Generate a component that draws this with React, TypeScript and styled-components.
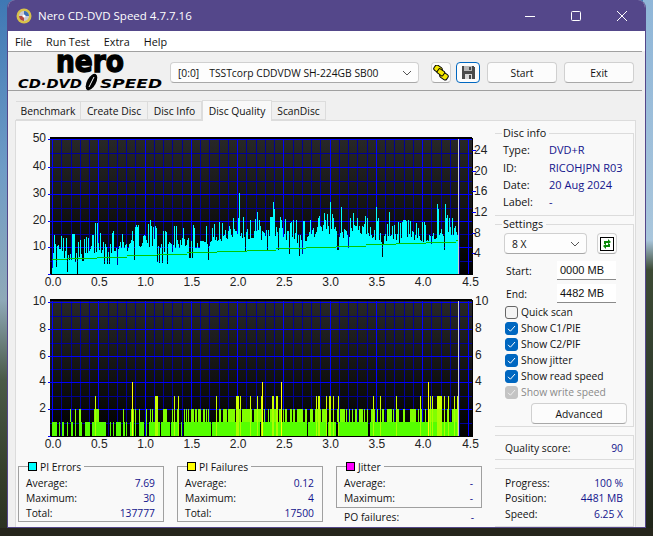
import styled, { createGlobalStyle } from 'styled-components'

const UI_FONT = '"Open Sans", "Noto Sans", sans-serif'
const DATA_FONT = '"Liberation Sans", Arial, sans-serif'

const GlobalStyle = createGlobalStyle`
  html, body {
    margin: 0;
    width: 653px;
    height: 536px;
    overflow: hidden;
  }
  body {
    font-family: ${UI_FONT};
    font-size: 10.3px;
    color: #111;
    background:
      linear-gradient(180deg, transparent 0, transparent 528px, #26261c 528px),
      linear-gradient(180deg, #8fb6d8 0, #a9c6dc 240px, #3c4a34 270px, #2f3a2c 400px, #1f2418 536px) right top / 10px 100% no-repeat,
      linear-gradient(180deg, #3f78b4 0, #6f9cc6 170px, #8fa9b8 300px, #4a5a48 380px, #36402c 470px, #2a3020 536px);
  }
`

const Desktop = styled.div`
  box-sizing: border-box;
  width: 653px;
  height: 536px;
  padding: 0 7px 8px 7px;
  display: flex;
`

const Window = styled.div`
  flex: 1;
  display: flex;
  flex-direction: column;
  background: #f0f0f0;
  border: 1px solid #54478a;
  border-top: none;
  border-radius: 8px 8px 0 0;
  overflow: hidden;
`

const TitleBar = styled.div`
  height: 31px;
  flex: none;
  display: flex;
  align-items: center;
  background: #54478a;
  color: #fff;
  font-size: 11.5px;
  padding-left: 8px;
`

const TitleText = styled.span`
  margin-left: 6px;
  flex: 1;
`

const WinButton = styled.div`
  width: 46px;
  height: 31px;
  display: flex;
  align-items: center;
  justify-content: center;
`

const MenuBar = styled.div`
  height: 20px;
  flex: none;
  display: flex;
  align-items: center;
  gap: 14px;
  background: #fff;
  padding-left: 7px;
  font-size: 10.8px;
`

const Toolbar = styled.div`
  height: 35px;
  flex: none;
  display: flex;
  align-items: center;
  border-top: 1px solid #a0a0a0;
  border-bottom: 1px solid #a0a0a0;
  margin-right: 3px;
  padding: 3px 0 0 10px;
`

const Spacer = styled.div<{ $width: number }>`
  width: ${(p) => p.$width}px;
  flex: none;
`

const LogoSvg = styled.svg`
  flex: none;
  margin-top: -4px;
  overflow: visible;
`

const Combo = styled.div<{ $width: number }>`
  box-sizing: border-box;
  width: ${(p) => p.$width}px;
  height: 21px;
  flex: none;
  display: flex;
  align-items: center;
  justify-content: space-between;
  padding: 0 6px 0 7px;
  background: #fdfdfd;
  border: 1px solid #d0d0d0;
  border-bottom-color: #a8a8a8;
  border-radius: 4px;
`

const DriveId = styled.span`
  margin-right: 10px;
`

const ComboText = styled.span`
  flex: 1;
`

const Button = styled.div<{ $width: number; $focus?: boolean }>`
  box-sizing: border-box;
  width: ${(p) => p.$width}px;
  height: 21px;
  flex: none;
  display: flex;
  align-items: center;
  justify-content: center;
  background: #fcfcfc;
  border: 1px solid ${(p) => (p.$focus ? '#0067c0' : '#d0d0d0')};
  border-bottom-color: ${(p) => (p.$focus ? '#0067c0' : '#a8a8a8')};
  border-radius: 4px;
`

const TabArea = styled.div`
  flex: 1;
  min-height: 0;
  display: flex;
  flex-direction: column;
  padding: 9px 9px 0 7px;
`

const TabStrip = styled.div`
  height: 20px;
  flex: none;
  display: flex;
  align-items: flex-end;
  padding-left: 1px;
`

const Tab = styled.div<{ $width: number; $active?: boolean }>`
  box-sizing: border-box;
  width: ${(p) => p.$width}px;
  height: ${(p) => (p.$active ? 21 : 19)}px;
  margin-bottom: ${(p) => (p.$active ? -1 : 0)}px;
  display: flex;
  align-items: center;
  justify-content: center;
  background: ${(p) => (p.$active ? '#f9f9f9' : '#f0f0f0')};
  border: 1px solid #dcdcdc;
  border-bottom: ${(p) => (p.$active ? 'none' : '1px solid #dcdcdc')};
  border-left: ${(p) => (p.$active ? '1px solid #dcdcdc' : 'none')};
  position: relative;
`

const Panel = styled.div`
  flex: 1;
  min-height: 0;
  display: flex;
  background: #f9f9f9;
  border: 1px solid #dcdcdc;
  border-bottom: none;
`

const LeftColumn = styled.div`
  width: 479px;
  flex: none;
  display: flex;
  flex-direction: column;
  padding-top: 4px;
`

const ChartSvg = styled.svg`
  display: block;
  flex: none;
  font-family: ${DATA_FONT};
  font-size: 12px;
`

const StatsRow = styled.div`
  display: flex;
  gap: 13px;
  padding: 14px 0 0 2px;
`

const StatsColumn = styled.div`
  width: 146px;
  flex: none;
`

const StatsBox = styled.div<{ $height: number }>`
  position: relative;
  box-sizing: border-box;
  width: 146px;
  padding: 8px 8px 0 7px;
  height: ${(p) => p.$height}px;
  border: 1px solid #a0a0a0;
`

const Legend = styled.div`
  position: absolute;
  left: 9px;
  top: -8px;
  display: flex;
  align-items: center;
  gap: 3px;
  height: 15px;
  padding: 0 3px 0 0;
  background: #f9f9f9;
`

const Swatch = styled.span<{ $color: string }>`
  width: 7px;
  height: 7px;
  border: 1px solid #000;
  background: ${(p) => p.$color};
`

const StatRow = styled.div`
  height: 15px;
  display: flex;
  align-items: center;
  justify-content: space-between;
`

const Value = styled.span`
  color: #13138c;
`

const InfoValue = styled(Value)`
  font-size: 11px;
`

const PoRow = styled(StatRow)`
  padding: 1px 8px 0 8px;
`

const RightColumn = styled.div`
  flex: 1;
  min-width: 0;
  display: flex;
  flex-direction: column;
  gap: 8px;
  padding: 12px 1px 0 0;
`

const Group = styled.div<{ $height?: number }>`
  position: relative;
  box-sizing: border-box;
  flex: ${(p) => (p.$height ? `0 0 ${p.$height}px` : '1')};
  border: 1px solid #dcdcdc;
  border-left: none;
`

const GroupLegend = styled.div`
  position: absolute;
  left: 7px;
  top: -9px;
  padding: 0 3px 0 1px;
  height: 15px;
  line-height: 15px;
  background: #f9f9f9;
  font-size: 10.8px;
`

const InfoRows = styled.div`
  padding: 7px 0 0 8px;
`

const InfoRow = styled.div`
  height: 17.4px;
  display: grid;
  grid-template-columns: 46px 1fr;
  align-items: center;
`

const InfoLabel = styled.span`
  font-size: 10.8px;
`

const SettingsBody = styled.div`
  display: flex;
  flex-direction: column;
  padding: 8px 0 0 9px;
`

const SpeedRow = styled.div`
  display: flex;
  align-items: center;
  gap: 10px;
  margin-bottom: 7px;
`

const FieldRow = styled.div`
  display: flex;
  align-items: center;
  justify-content: space-between;
  height: 19px;
  padding: 0 17px 0 2px;

  & + & {
    margin-top: 4px;
  }
`

const Field = styled.div`
  box-sizing: border-box;
  width: 59px;
  height: 19px;
  padding-left: 3px;
  display: flex;
  align-items: center;
  background: #fff;
  border-bottom: 1px solid #8a8a8a;
  font-family: ${DATA_FONT};
  font-size: 11px;
`

const CheckList = styled.div`
  margin-top: 1px;
`

const CheckRow = styled.div<{ $disabled?: boolean }>`
  height: 16px;
  display: flex;
  align-items: center;
  gap: 3px;
  padding-left: 1px;
  color: ${(p) => (p.$disabled ? '#8a8a8a' : '#111')};
`

const CheckBox = styled.span<{ $state: 'on' | 'off' | 'disabled' }>`
  box-sizing: border-box;
  width: 13px;
  height: 13px;
  display: flex;
  align-items: center;
  justify-content: center;
  border-radius: 3px;
  border: 1px solid
    ${(p) => (p.$state === 'on' ? '#0067c0' : p.$state === 'off' ? '#666' : '#c4c4c4')};
  background: ${(p) => (p.$state === 'on' ? '#0067c0' : p.$state === 'off' ? '#f4f4f4' : '#c4c4c4')};
`

const AdvancedWrap = styled.div`
  display: flex;
  justify-content: flex-end;
  padding: 3px 6px 0 0;
`

const ScoreRow = styled.div`
  height: 100%;
  display: flex;
  align-items: center;
  justify-content: space-between;
  padding: 0 10px 0 10px;
`

const ProgressRows = styled.div`
  padding: 6px 10px 0 10px;

  ${StatRow} {
    height: 15.5px;
  }
`

// chart helpers, all in page pixels shifted by the svg origin
const SVG_LEFT = 16
const X0 = 52
const PX_PER_GB = 92.55

const lerpBase = (x: number) => {
  const pts = [
    [52, 8], [100, 9.5], [144, 10.5], [190, 12.5], [240, 14], [280, 15.5], [340, 15.5], [400, 14], [440, 14], [458, 13],
  ]
  for (let i = 1; i < pts.length; i++) {
    if (x <= pts[i][0]) {
      const t = (x - pts[i - 1][0]) / (pts[i][0] - pts[i - 1][0])
      return pts[i - 1][1] + t * (pts[i][1] - pts[i - 1][1])
    }
  }
  return 13
}

const SPIKES: Record<number, number> = {
  72: 15, 73: 15, 74: 15, 95: 19, 97: 19, 113: 16, 122: 15, 132: 16, 150: 20, 155: 18, 156: 17, 163: 16,
  174: 18, 176: 18, 183: 17, 194: 17, 212: 17, 222: 19, 229: 18, 233: 21, 238: 21, 239: 30, 250: 20,
  257: 23, 260: 18, 273: 26.7, 274: 24, 281: 20, 293: 20, 296: 20, 310: 20, 318: 21, 325: 20, 330: 26.7,
  333: 21, 341: 25, 350: 21, 357: 21, 367: 21, 376: 25, 378: 21, 389: 23, 404: 20, 412: 16, 418: 17,
  437: 26, 438: 24, 445: 26, 455: 18,
}

let seed = 17
const rand = () => {
  seed = (seed * 16807) % 2147483647
  return seed / 2147483647
}

const PIE_BARS = Array.from({ length: 406 }, (_, i) => {
  const x = 52 + i
  if (SPIKES[x]) return { x, v: SPIKES[x] }
  const r = rand()
  const drift = Math.sin(x / 7) + Math.sin(x / 17) * 1.2
  let v = lerpBase(x) + drift + (r - 0.45) * 6
  if (r > 0.8) v += 3
  if (r < 0.07) v -= 4
  return { x, v }
})

const greenStep = (x: number) => Math.round((5.5 + ((x - 52) / 406) * 6.8) * 2) / 2

const L1 = [
  [6, 22], [27, 31], [37, 42], [52, 55], [64, 70], [74, 79], [86, 97], [105, 120], [125, 168], [180, 184],
  [190, 193], [197, 214], [220, 224], [228, 231], [240, 252], [254, 258], [266, 281], [289, 292], [296, 316],
  [320, 330], [333, 360], [363, 388], [392, 395], [402, 484], [486, 497], [499, 630],
  [633, 771], [774, 831], [834, 858], [864, 954], [960, 1227],
]
const L2 = [
  [60, 63], [75, 78], [87, 93], [132, 147], [220, 223], [243, 253], [255, 258], [267, 270], [289, 292],
  [300, 303], [306, 309], [315, 325], [339, 351], [366, 369], [373, 376], [381, 387], [402, 405], [408, 411],
  [414, 417], [423, 433], [435, 441], [444, 453], [459, 465], [468, 471], [474, 477], [498, 501], [507, 513],
  [519, 531], [534, 555], [558, 573], [576, 606], [612, 639], [642, 645], [654, 657], [660, 684], [687, 693],
  [699, 702], [705, 711], [720, 726], [729, 735], [741, 759], [765, 771], [780, 789], [795, 813], [816, 828],
  [837, 843], [849, 852], [861, 864], [870, 885], [888, 891], [897, 900], [906, 909], [915, 921], [927, 939],
  [942, 945], [951, 954], [963, 975], [981, 984], [996, 1002], [1011, 1026], [1029, 1032], [1041, 1047],
  [1059, 1065], [1080, 1098], [1104, 1107], [1113, 1116], [1125, 1128], [1134, 1176], [1182, 1185],
  [1191, 1194], [1206, 1227],
]
const L3 = [
  [135, 138], [315, 324], [372, 375], [384, 387], [498, 501], [558, 567], [570, 573], [600, 603], [621, 624],
  [633, 639], [666, 672], [678, 684], [798, 801], [804, 810], [828, 831], [837, 843], [849, 852], [864, 867],
  [969, 972], [990, 993], [1038, 1041], [1110, 1113], [1134, 1137], [1140, 1143], [1146, 1149], [1161, 1176],
  [1182, 1185], [1194, 1197], [1212, 1215], [1221, 1224],
]
const L4 = [[246, 249], [636, 639], [693, 696], [1134, 1137]]

const zx = (z: number) => 50 + z / 3

function Grid({ top, bottom, major, minor }: { top: number; bottom: number; major: number[]; minor: number[] }) {
  const xs = Array.from({ length: 46 }, (_, i) => X0 + (i * PX_PER_GB) / 10)
  return (
    <g shapeRendering="crispEdges">
      {minor.map((y) => (
        <rect key={`mi${y}`} x={34} y={y} width={422} height={1} fill="#000098" />
      ))}
      {xs.map((x, i) => (
        <rect
          key={i}
          x={Math.round(x - SVG_LEFT)}
          y={top}
          width={1}
          height={bottom - top}
          fill={i % 5 === 0 ? '#0000ff' : '#000098'}
        />
      ))}
      {major.map((y) => (
        <rect key={`ma${y}`} x={34} y={y} width={422} height={1} fill="#0000ff" />
      ))}
    </g>
  )
}

function XLabels({ y }: { y: number }) {
  return (
    <g fill="#222" textAnchor="middle">
      {Array.from({ length: 10 }, (_, i) => (
        <text key={i} x={X0 - SVG_LEFT + (i * PX_PER_GB) / 2 + (i === 9 ? 2 : 1)} y={y}>
          {(i / 2).toFixed(1)}
        </text>
      ))}
    </g>
  )
}

function Backdrop({ id, top, bottom }: { id: string; top: number; bottom: number }) {
  return (
    <>
      <defs>
        <linearGradient id={id} x1="0" y1="0" x2="0" y2="1">
          <stop offset="0" stopColor="#282828" />
          <stop offset="1" stopColor="#000" />
        </linearGradient>
      </defs>
      <rect x={34} y={top} width={422} height={bottom - top} fill={`url(#${id})`} />
    </>
  )
}

function PieChart() {
  const top = 13
  const bottom = 149
  const major = [14, 42, 69, 96, 122]
  const minor = [28, 56, 83, 109, 136]
  const rightTicks = [24, 20, 16, 12, 8, 4]
  return (
    <ChartSvg width={479} height={167}>
      <Backdrop id="pieBg" top={top} bottom={bottom} />
      <Grid top={top} bottom={bottom} major={major} minor={minor} />
      <g shapeRendering="crispEdges">
        {PIE_BARS.map((b) => (
          <rect key={b.x} x={b.x - SVG_LEFT} y={149 - b.v * 2.69} width={1} height={b.v * 2.69} fill="#00ffff" />
        ))}
        {PIE_BARS.map((b) => (
          <rect key={b.x} x={b.x - SVG_LEFT} y={149 - greenStep(b.x) * 2.69} width={1} height={1} fill="#00c800" />
        ))}
        <rect x={442} y={top} width={1} height={bottom - top} fill="#cfcfcf" />
        <rect x={34} y={12} width={422} height={2} fill="#000" />
        <rect x={34} y={bottom} width={422} height={1} fill="#000" />
        <rect x={456} y={top} width={1} height={bottom - top + 1} fill="#000" />
        {major.concat(149).map((y) => (
          <rect key={y} x={32} y={y} width={3} height={1} fill="#0000ff" />
        ))}
        {rightTicks.map((t) => (
          <rect key={t} x={456} y={Math.round(149 - t * 5.17)} width={4} height={1} fill="#0000ff" />
        ))}
      </g>
      <g fill="#222" textAnchor="end">
        {[50, 40, 30, 20, 10].map((v, i) => (
          <text key={v} x={30} y={major[i] + 3}>
            {v}
          </text>
        ))}
      </g>
      <g fill="#222">
        {rightTicks.map((t) => (
          <text key={t} x={458} y={149 - t * 5.17 + 4}>
            {t}
          </text>
        ))}
      </g>
      <XLabels y={161} />
    </ChartSvg>
  )
}

function PifChart() {
  const top = 8
  const bottom = 144
  const major = [10, 37, 64, 90, 117]
  const minor = [24, 51, 77, 104, 131]
  const rows = { one: 130, two: 117, three: 104, four: 90 }
  const bar = (s: number[], y: number, h: number, fill: string, key: string) => (
    <rect key={key} x={zx(s[0]) - SVG_LEFT} y={y} width={(s[1] - s[0]) / 3} height={h} fill={fill} />
  )
  return (
    <ChartSvg width={479} height={160}>
      <Backdrop id="pifBg" top={top} bottom={bottom} />
      <Grid top={top} bottom={bottom} major={major} minor={minor} />
      <g shapeRendering="crispEdges">
        {L1.map((s, i) => bar(s, rows.one, bottom - rows.one, '#55ff00', `a${i}`))}
        {L2.map((s, i) => bar(s, rows.two, rows.one - rows.two, '#80ff00', `b${i}`))}
        {L3.map((s, i) => bar(s, rows.three, rows.two - rows.three, '#ccff00', `c${i}`))}
        {L3.map((s, i) => bar(s, rows.two, bottom - rows.two, '#aaff00', `d${i}`))}
        {L4.map((s, i) => bar(s, rows.four, bottom - rows.four, '#ffff00', `e${i}`))}
        <rect x={442} y={top} width={1} height={bottom - top} fill="#cfcfcf" />
        <rect x={34} y={7} width={422} height={2} fill="#000" />
        <rect x={34} y={bottom} width={422} height={1} fill="#000" />
        <rect x={456} y={top} width={1} height={bottom - top + 1} fill="#000" />
        {major.concat(144).map((y) => (
          <rect key={y} x={32} y={y} width={3} height={1} fill="#0000ff" />
        ))}
      </g>
      <g fill="#222" textAnchor="end">
        {[10, 8, 6, 4, 2].map((v, i) => (
          <text key={v} x={30} y={major[i] + 3}>
            {v}
          </text>
        ))}
      </g>
      <g fill="#222">
        {[10, 8, 6, 4, 2].map((v, i) => (
          <text key={v} x={459} y={major[i] + 3}>
            {v}
          </text>
        ))}
      </g>
      <XLabels y={156} />
    </ChartSvg>
  )
}

function AppIcon() {
  return (
    <svg width={16} height={16} viewBox="0 0 16 16">
      <circle cx={8} cy={8} r={7.5} fill="#d8c24a" />
      <circle cx={8} cy={8} r={5} fill="#c9c9d4" />
      <path d="M8 3a5 5 0 0 1 5 5H8z" fill="#3d6fb5" />
      <path d="M3 8a5 5 0 0 0 5 5V8z" fill="#b5483d" />
      <circle cx={8} cy={8} r={1.6} fill="#fff" />
    </svg>
  )
}

function NeroLogo() {
  const small = {
    fontFamily: '"DejaVu Sans", sans-serif',
    fontWeight: 700,
    fontStyle: 'italic',
    fontSize: 13,
    lengthAdjust: 'spacingAndGlyphs',
  } as const
  return (
    <LogoSvg width={146} height={38} viewBox="0 0 146 38">
      <text
        x={38}
        y={20}
        fontFamily='"DejaVu Sans", sans-serif'
        fontWeight={700}
        fontSize={30}
        textLength={68}
        lengthAdjust="spacingAndGlyphs"
        stroke="#000"
        strokeWidth={1.4}
      >
        nero
      </text>
      <text x={0} y={36} textLength={64} {...small}>
        CD·DVD
      </text>
      <ellipse cx={73.5} cy={30} rx={4.5} ry={9} transform="rotate(28 73.5 30)" fill="#000" />
      <path d="M71 35 L76 25" stroke="#fff" strokeWidth={1} />
      <text x={82} y={36} textLength={62} {...small}>
        SPEED
      </text>
    </LogoSvg>
  )
}

function Chevron() {
  return (
    <svg width={10} height={6} viewBox="0 0 10 6">
      <path d="M1 1l4 4 4-4" fill="none" stroke="#555" strokeWidth={1} />
    </svg>
  )
}

function LinkIcon() {
  return (
    <svg width={16} height={16} viewBox="0 0 16 16">
      <g stroke="#000" strokeWidth={1} fill="#f5e800">
        <rect x={1} y={1} width={8} height={6} rx={2} transform="rotate(35 5 4)" />
        <rect x={7} y={8} width={8} height={6} rx={2} transform="rotate(35 11 11)" />
        <rect x={4} y={5} width={7} height={5} rx={1} transform="rotate(35 8 8)" />
      </g>
    </svg>
  )
}

function SaveIcon() {
  return (
    <svg width={13} height={13} viewBox="0 0 13 13" shapeRendering="crispEdges">
      <path d="M0 0h11l2 2v11H0z" fill="#4a4a4a" />
      <rect x={2} y={0} width={8} height={5} fill="#b8b8b8" />
      <rect x={7} y={1} width={2} height={3} fill="#4a4a4a" />
      <rect x={3} y={8} width={7} height={5} fill="#d8d8d8" />
      <rect x={7} y={9} width={2} height={4} fill="#4a4a4a" />
    </svg>
  )
}

function RefreshIcon() {
  return (
    <svg width={14} height={14} viewBox="0 0 14 14">
      <rect x={0.5} y={0.5} width={13} height={13} fill="#fff" stroke="#000" />
      <path d="M4 7V4h4V2l3 3-3 2.2V6H6v1z" fill="#0a8a0a" />
      <path d="M10 7v3H6v2L3 9l3-2.2V8h2V7z" fill="#0a8a0a" />
    </svg>
  )
}

function Check({ color }: { color: string }) {
  return (
    <svg width={9} height={9} viewBox="0 0 9 9">
      <path d="M1 4.8l2.4 2.4L8 2" fill="none" stroke={color} strokeWidth={1} />
    </svg>
  )
}

const checks = [
  { label: 'Quick scan', state: 'off' as const },
  { label: 'Show C1/PIE', state: 'on' as const },
  { label: 'Show C2/PIF', state: 'on' as const },
  { label: 'Show jitter', state: 'on' as const },
  { label: 'Show read speed', state: 'on' as const },
  { label: 'Show write speed', state: 'disabled' as const },
]

const tabs = [
  { label: 'Benchmark', width: 65 },
  { label: 'Create Disc', width: 67 },
  { label: 'Disc Info', width: 54 },
  { label: 'Disc Quality', width: 70, active: true },
  { label: 'ScanDisc', width: 54 },
]

const discInfo = [
  ['Type:', 'DVD+R'],
  ['ID:', 'RICOHJPN R03'],
  ['Date:', '20 Aug 2024'],
  ['Label:', '-'],
]

function StatsGroup({
  title,
  color,
  rows,
  height,
}: {
  title: string
  color: string
  rows: [string, string][]
  height: number
}) {
  return (
    <StatsBox $height={height}>
      <Legend>
        <Swatch $color={color} />
        {title}
      </Legend>
      {rows.map(([k, v]) => (
        <StatRow key={k}>
          <span>{k}</span>
          <Value>{v}</Value>
        </StatRow>
      ))}
    </StatsBox>
  )
}

export default function App() {
  return (
    <Desktop>
      <GlobalStyle />
      <Window>
        <TitleBar>
          <AppIcon />
          <TitleText>Nero CD-DVD Speed 4.7.7.16</TitleText>
          <WinButton>
            <svg width={10} height={10} viewBox="0 0 10 10">
              <path d="M0 5.5h10" stroke="#fff" />
            </svg>
          </WinButton>
          <WinButton>
            <svg width={10} height={10} viewBox="0 0 10 10">
              <rect x={0.5} y={0.5} width={9} height={9} rx={1} fill="none" stroke="#fff" />
            </svg>
          </WinButton>
          <WinButton>
            <svg width={10} height={10} viewBox="0 0 10 10">
              <path d="M0 0l10 10M10 0L0 10" stroke="#fff" />
            </svg>
          </WinButton>
        </TitleBar>
        <MenuBar>
          <span>File</span>
          <span>Run Test</span>
          <span>Extra</span>
          <span>Help</span>
        </MenuBar>
        <Toolbar>
          <NeroLogo />
          <Spacer $width={6} />
          <Combo $width={249}>
            <DriveId>[0:0]</DriveId>
            <ComboText>TSSTcorp CDDVDW SH-224GB SB00</ComboText>
            <Chevron />
          </Combo>
          <Spacer $width={12} />
          <Button $width={20}>
            <LinkIcon />
          </Button>
          <Spacer $width={5} />
          <Button $width={24} $focus>
            <SaveIcon />
          </Button>
          <Spacer $width={7} />
          <Button $width={70}>Start</Button>
          <Spacer $width={7} />
          <Button $width={70}>Exit</Button>
        </Toolbar>
        <TabArea>
          <TabStrip>
            {tabs.map((t) => (
              <Tab key={t.label} $width={t.width} $active={t.active}>
                {t.label}
              </Tab>
            ))}
          </TabStrip>
          <Panel>
            <LeftColumn>
              <PieChart />
              <PifChart />
              <StatsRow>
                <StatsGroup
                  title="PI Errors"
                  color="#00ffff"
                  height={56}
                  rows={[
                    ['Average:', '7.69'],
                    ['Maximum:', '30'],
                    ['Total:', '137777'],
                  ]}
                />
                <StatsGroup
                  title="PI Failures"
                  color="#ffff00"
                  height={56}
                  rows={[
                    ['Average:', '0.12'],
                    ['Maximum:', '4'],
                    ['Total:', '17500'],
                  ]}
                />
                <StatsColumn>
                  <StatsGroup
                    title="Jitter"
                    color="#ff00ff"
                    height={42}
                    rows={[
                      ['Average:', '-'],
                      ['Maximum:', '-'],
                    ]}
                  />
                  <PoRow>
                    <span>PO failures:</span>
                    <Value>-</Value>
                  </PoRow>
                </StatsColumn>
              </StatsRow>
            </LeftColumn>
            <RightColumn>
              <Group $height={83}>
                <GroupLegend>Disc info</GroupLegend>
                <InfoRows>
                  {discInfo.map(([k, v]) => (
                    <InfoRow key={k}>
                      <InfoLabel>{k}</InfoLabel>
                      <InfoValue>{v}</InfoValue>
                    </InfoRow>
                  ))}
                </InfoRows>
              </Group>
              <Group $height={203}>
                <GroupLegend>Settings</GroupLegend>
                <SettingsBody>
                  <SpeedRow>
                    <Combo $width={83}>
                      <span>8 X</span>
                      <Chevron />
                    </Combo>
                    <Button $width={20}>
                      <RefreshIcon />
                    </Button>
                  </SpeedRow>
                  <FieldRow>
                    <span>Start:</span>
                    <Field>0000 MB</Field>
                  </FieldRow>
                  <FieldRow>
                    <span>End:</span>
                    <Field>4482 MB</Field>
                  </FieldRow>
                  <CheckList>
                    {checks.map((c) => (
                      <CheckRow key={c.label} $disabled={c.state === 'disabled'}>
                        <CheckBox $state={c.state}>
                          {c.state !== 'off' && <Check color={c.state === 'on' ? '#fff' : '#eee'} />}
                        </CheckBox>
                        {c.label}
                      </CheckRow>
                    ))}
                  </CheckList>
                  <AdvancedWrap>
                    <Button $width={96}>Advanced</Button>
                  </AdvancedWrap>
                </SettingsBody>
              </Group>
              <Group $height={25}>
                <ScoreRow>
                  <span>Quality score:</span>
                  <Value>90</Value>
                </ScoreRow>
              </Group>
              <Group>
                <ProgressRows>
                  <StatRow>
                    <span>Progress:</span>
                    <Value>100 %</Value>
                  </StatRow>
                  <StatRow>
                    <span>Position:</span>
                    <Value>4481 MB</Value>
                  </StatRow>
                  <StatRow>
                    <span>Speed:</span>
                    <Value>6.25 X</Value>
                  </StatRow>
                </ProgressRows>
              </Group>
            </RightColumn>
          </Panel>
        </TabArea>
      </Window>
    </Desktop>
  )
}
